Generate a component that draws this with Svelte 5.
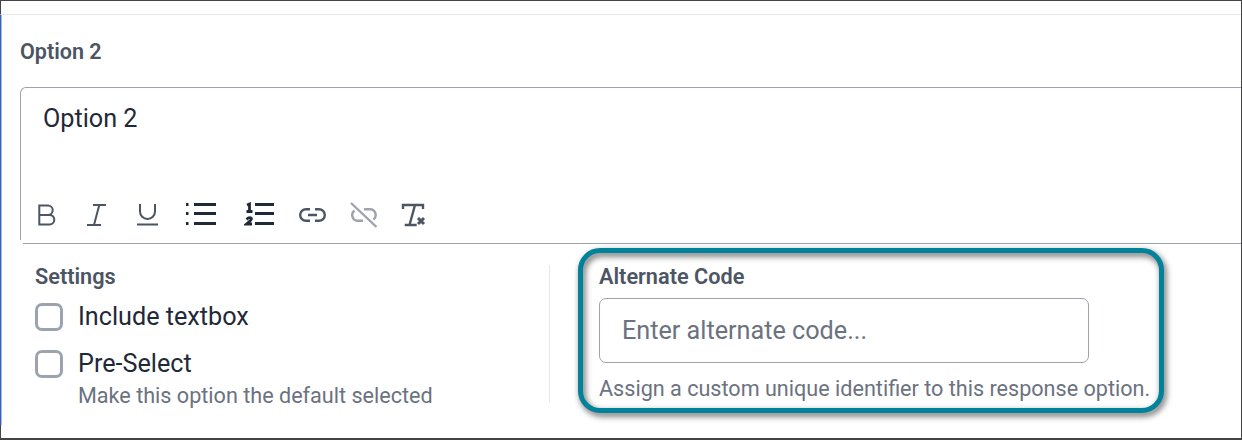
<script>
  let alternateCode = $state("");
</script>

<div class="frame">
  <div class="panel">
    <h4 class="option-title">Option 2</h4>

    <div class="editor">
      <div class="editor-text">Option 2</div>
      <div class="toolbar">
        <svg class="tool bold" viewBox="0 0 24 26" aria-label="Bold"><path d="M5.300 3.500H14a4.700 4.700 0 0 1 0 9.400H5.300zM14 12.900h1.500a4.800 4.800 0 0 1 0 9.600H5.300v-9.600" /></svg>
        <svg class="tool italic" viewBox="0 0 24 26" aria-label="Italic"><path d="M10 3h13M4 23h14M16.300 3L11 23" /></svg>
        <svg class="tool underline" viewBox="0 0 24 26" aria-label="Underline"><path d="M5 2v7.500a7.500 7.500 0 0 0 15 0V2M2 22.500h21" /></svg>
        <svg class="tool dark bullets" viewBox="0 0 32 26" aria-label="Bullet list"><path class="thick" d="M9 2.500h22M9 11.500h22M9 21.500h22M1 2.500h2.500M1 11.500h2.500M1 21.500h2.500" /></svg>
        <svg class="tool dark numbers" viewBox="0 0 32 26" aria-label="Numbered list"><path class="thick" d="M11 2.500h19M11 11.500h19M11 21.500h19" /><path class="num" d="M3 3l2.500-1V9M2.500 9.500h6M2.500 17.500q2.500-2.500 4.500-1.500t-4.500 6h5.500" /></svg>
        <svg class="tool link" viewBox="0 0 28 26" aria-label="Link"><path class="mid" d="M11 7.200H7a5.800 5.800 0 0 0 0 11.600h4M16 7.200h4a5.800 5.800 0 0 1 0 11.600h-4M9 13h9" /></svg>
        <svg class="tool faded unlink" viewBox="0 0 28 26" aria-label="Unlink"><path class="mid" d="M4.500 8.500a5.800 5.800 0 0 0 2.500 10.300h6M14 7.200h6a5.800 5.800 0 0 1 3.500 10.300M1 1l25.500 24" /></svg>
        <svg class="tool clear" viewBox="0 0 28 26" aria-label="Clear formatting"><path class="mid" d="M2 7V3h20v4M14 3L8.500 23M3.700 23h12" /><path class="thick" d="M17 16l6 6M23 16l-6 6" /></svg>
      </div>
    </div>

    <div class="bottom">
      <section class="settings">
        <h5>Settings</h5>
        <label class="check first"><input type="checkbox" /><span>Include textbox</span></label>
        <label class="check second"><input type="checkbox" /><span>Pre-Select</span></label>
        <p class="hint indent">Make this option the default selected</p>
      </section>

      <section class="alternate">
        <h5>Alternate Code</h5>
        <input class="code" type="text" placeholder="Enter alternate code..." bind:value={alternateCode} />
        <p class="hint">Assign a custom unique identifier to this response option.</p>
        <div class="callout"></div>
      </section>
    </div>
  </div>
</div>

<style>
  :global(body) {
    margin: 0;
    background: #fff;
  }

  .frame {
    box-sizing: border-box;
    width: 1242px;
    height: 440px;
    border: 1px solid #444;
    border-left: 0;
    border-bottom-width: 2px;
    box-shadow: inset 1px 0 0 #444;
    overflow: hidden;
    padding-top: 13px;
    font-family: Roboto, "Liberation Sans", sans-serif;
    color: #1f2937;
    background: #fff;
  }

  .panel {
    box-sizing: border-box;
    height: calc(100% - 13px);
    border-top: 1px solid #e5e7eb;
    border-left: 1px solid #3b5fc0;
    box-shadow: inset 1px 0 0 #a8b8e4;
    padding: 25px 0 0 19px;
  }

  .option-title {
    margin: 0;
    font-size: 21.5px;
    line-height: 24px;
    font-weight: 600;
    color: #4b5563;
  }

  .editor {
    box-sizing: border-box;
    height: 156px;
    margin-top: 23px;
    margin-right: -4px;
    border: 1px solid #9ca3af;
    border-right: 0;
    border-bottom: 0;
    border-radius: 6px 0 0 0;
    position: relative;
    display: flex;
    flex-direction: column;
    justify-content: space-between;
  }

  .editor::after {
    content: "";
    position: absolute;
    left: -1px;
    bottom: 0;
    width: 2px;
    height: 3px;
    background: #fff;
  }

  .editor-text {
    padding: 17px 0 0 22px;
    font-size: 25.2px;
    line-height: 28px;
  }

  .toolbar {
    display: flex;
    align-items: center;
    padding: 0 0 15px 13px;
  }

  .tool {
    height: 26px;
    width: 24px;
    flex: none;
    fill: none;
    stroke: #4b5563;
    stroke-width: 2;
  }

  .italic { margin-left: 25px; }
  .underline { margin-left: 28px; }
  .bullets { width: 32px; margin-left: 26px; }
  .numbers { width: 32px; margin-left: 27px; }
  .link { width: 28px; margin-left: 23px; }
  .unlink { width: 28px; margin-left: 23px; }
  .clear { width: 28px; margin-left: 23px; }

  .tool.dark { stroke: #1f2937; }
  .tool.faded { stroke: #9ca3af; }
  .tool .thick { stroke-width: 3; }
  .tool .mid { stroke-width: 2.4; }
  .tool .num { stroke-width: 2.8; }

  .bottom {
    display: flex;
    box-sizing: border-box;
    height: 160px;
    margin-left: 3px;
    padding-top: 21px;
    border-top: 1px solid #9ca3af;
  }

  .settings {
    box-sizing: border-box;
    flex: none;
    width: 527px;
    height: 137px;
    padding-left: 12px;
    border-right: 1px solid #e5e7eb;
  }

  .alternate {
    position: relative;
    flex: none;
    width: 600px;
    padding-left: 49px;
    box-sizing: border-box;
  }

  h5 {
    margin: 0 0 9px;
    font-size: 21.7px;
    line-height: 24px;
    font-weight: 600;
    color: #4b5563;
  }

  .check {
    display: flex;
    align-items: center;
    gap: 15px;
    font-size: 25.2px;
    line-height: 32px;
  }

  .check.first { margin-top: 12px; }
  .check.second { margin-top: 15px; }

  .check input {
    appearance: none;
    box-sizing: border-box;
    margin: 0;
    width: 28px;
    height: 28px;
    border: 3px solid #9ca3af;
    border-radius: 7px;
    background: #fff;
  }

  .hint {
    margin: 0;
    font-size: 21.6px;
    line-height: 28px;
    color: #6b7280;
    white-space: nowrap;
  }

  .indent {
    margin-top: 2px;
    padding-left: 43px;
  }

  .code {
    box-sizing: border-box;
    display: block;
    width: 490px;
    height: 65px;
    padding: 0 22px;
    border: 1px solid #9ca3af;
    border-radius: 7px;
    font: inherit;
    font-size: 25.2px;
    outline: none;
    margin-bottom: 12px;
  }

  .code::placeholder {
    color: #6b7280;
    opacity: 1;
  }

  .callout {
    position: absolute;
    left: 28px;
    top: -17px;
    width: 586px;
    height: 165px;
    box-sizing: border-box;
    border: 5px solid #00829b;
    border-radius: 22px;
    filter: drop-shadow(2px 3px 3px rgba(0, 0, 0, 0.65));
    pointer-events: none;
  }
</style>
